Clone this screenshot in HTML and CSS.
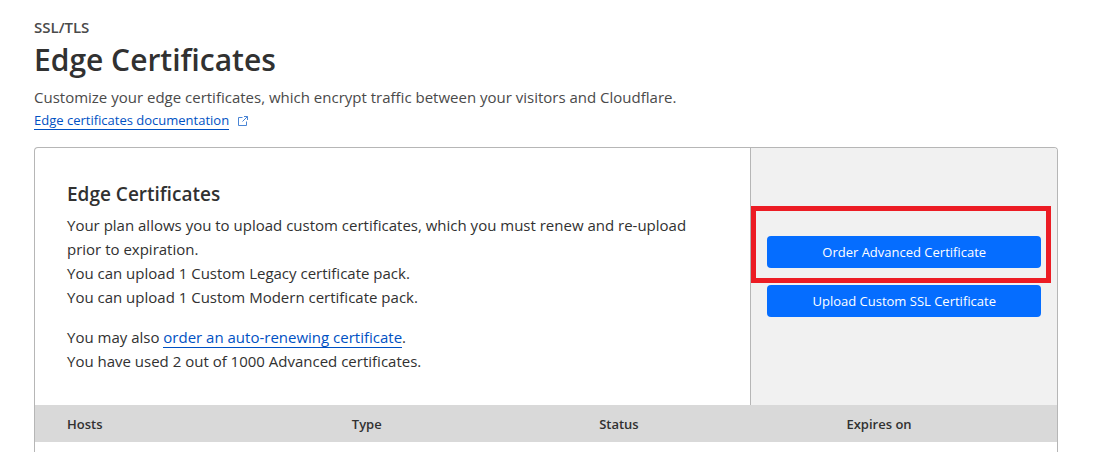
FILE: index.html
```html
<!DOCTYPE html>
<html lang="en">
<head>
<meta charset="utf-8">
<title>Edge Certificates</title>
<link rel="stylesheet" href="styles.css">
</head>
<body>
<main class="page">
  <header class="page-header">
    <p class="eyebrow">SSL/TLS</p>
    <h1 class="title">Edge Certificates</h1>
    <p class="lead">Customize your edge certificates, which encrypt traffic between your visitors and Cloudflare.</p>
    <div class="doc-row">
      <a class="link" href="#">Edge certificates documentation</a>
      <svg class="external" viewBox="0 0 12 12" aria-hidden="true"><path d="M5.5 2.5h-4v8h8v-4M7 1.5h3.5V5M10.5 1.5 5.5 6.5"/></svg>
    </div>
  </header>
  <section class="card">
    <div class="card-top">
      <div class="card-body">
        <h2 class="card-title">Edge Certificates</h2>
        <p class="text">Your plan allows you to upload custom certificates, which you must renew and re-upload prior to expiration.</p>
        <p class="text">You can upload 1 Custom Legacy certificate pack.</p>
        <p class="text">You can upload 1 Custom Modern certificate pack.</p>
        <p class="text spaced">You may also <a class="link" href="#">order an auto-renewing certificate</a>.</p>
        <p class="text">You have used 2 out of 1000 Advanced certificates.</p>
      </div>
      <div class="card-actions">
        <div class="highlight"><button class="button" type="button">Order Advanced Certificate</button></div>
        <button class="button" type="button">Upload Custom SSL Certificate</button>
      </div>
    </div>
    <table class="certs">
      <thead><tr><th class="col-hosts">Hosts</th><th class="col">Type</th><th class="col">Status</th><th>Expires on</th></tr></thead>
      <tbody><tr><td colspan="4"></td></tr></tbody>
    </table>
  </section>
</main>
</body>
</html>
```
FILE: styles.css
```css
* { box-sizing: border-box; }
body { margin: 0; background: #fff; color: #313131; font-family: "Open Sans", "Noto Sans", sans-serif; font-size: 15px; line-height: 24px; }
h1, h2, p { margin: 0; }
.page { padding: 15px 37px 0 34px; }
.eyebrow { font-weight: 600; color: #4a4a4a; }
.title { font-size: 30px; font-weight: 600; line-height: 42px; }
.lead { margin-top: 4px; color: #4a4a4a; }
.link { color: #0051c3; text-decoration: none; border-bottom: 1px solid #0051c3; }
.doc-row { display: flex; align-items: center; gap: 8px; font-size: 13px; line-height: 18px; margin-top: 2px; }
.external { width: 12px; height: 12px; fill: none; stroke: #4a85d5; stroke-width: 1; }
.card { margin-top: 17px; border: 1px solid #b6b6b6; border-bottom: 0; border-radius: 4px 4px 0 0; overflow: hidden; }
.card-top { display: flex; }
.card-body { flex: 1; padding: 32px; }
.card-title { font-size: 19px; font-weight: 600; line-height: 28px; margin-bottom: 5px; }
.spaced { margin-top: 16px; }
.card-actions { flex: 0 0 30%; display: flex; flex-direction: column; justify-content: center; gap: 17px; background: #f1f1f1; border-left: 1px solid #b6b6b6; padding: 16px; }
.highlight { position: relative; }
.highlight::after { content: ""; position: absolute; inset: -30px -10px -15px -16px; border: 5px solid #ec1c24; pointer-events: none; }
.button { display: block; width: 100%; height: 32px; border: 0; border-radius: 4px; background: #056dff; color: #fff; font: 13px/20px "Open Sans", "Noto Sans", sans-serif; cursor: pointer; }
.certs { width: 100%; table-layout: fixed; border-collapse: collapse; }
.certs th { background: #d9d9d9; text-align: left; font-size: 13px; font-weight: 600; line-height: 20px; padding: 9px 0 8px; }
.certs .col-hosts { width: 31%; padding-left: 32px; }
.certs .col { width: 24.2%; }
.certs td { height: 10px; padding: 0; }
```
